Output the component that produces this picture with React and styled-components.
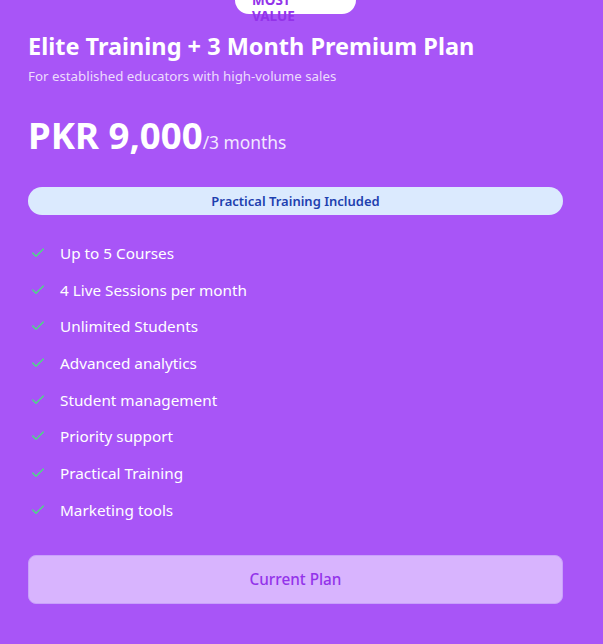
import styled, { createGlobalStyle } from 'styled-components'
import { Check } from 'lucide-react'

const GlobalStyle = createGlobalStyle`
  html, body {
    margin: 0;
    padding: 0;
    background: #a855f7;
  }
  body {
    font-family: "Noto Sans", "Open Sans", sans-serif;
  }
`

const features = [
  'Up to 5 Courses',
  '4 Live Sessions per month',
  'Unlimited Students',
  'Advanced analytics',
  'Student management',
  'Priority support',
  'Practical Training',
  'Marketing tools',
]

const Card = styled.div`
  position: relative;
  background: #a855f7;
  min-height: 644px;
  box-sizing: border-box;
  padding: 30px 40px 0 28px;
  color: #fff;
`

const Badge = styled.div`
  position: absolute;
  top: -14px;
  left: 235px;
  width: 121px;
  height: 28px;
  box-sizing: border-box;
  padding: 6px 40px 0 17px;
  background: #fff;
  border-radius: 14px;
  color: #9333ea;
  font-size: 13.5px;
  font-weight: 700;
  line-height: 16px;
  text-transform: uppercase;
`

const Title = styled.h2`
  margin: 0;
  font-size: 23.5px;
  font-weight: 700;
  line-height: 32px;
`

const Subtitle = styled.p`
  margin: 5px 0 0;
  font-size: 13.3px;
  line-height: 18px;
  color: #eddcfd;
`

const PriceRow = styled.div`
  display: flex;
  align-items: baseline;
  margin-top: 25px;
`

const Amount = styled.span`
  font-size: 36.6px;
  font-weight: 700;
  line-height: 50px;
`

const Period = styled.span`
  font-size: 17.4px;
  color: #f3e8ff;
`

const IncludedPill = styled.div`
  margin-top: 27px;
  height: 28px;
  display: flex;
  align-items: center;
  justify-content: center;
  background: #dbeafe;
  border-radius: 14px;
  color: #1e40af;
  font-size: 13px;
  font-weight: 600;
`

const FeatureList = styled.ul`
  list-style: none;
  margin: 27px 0 0;
  padding: 0;
  display: flex;
  flex-direction: column;
  gap: 14.7px;
`

const Feature = styled.li`
  display: flex;
  align-items: center;
  gap: 14px;
  font-size: 15.3px;
  line-height: 22px;
  color: #fff;
`

const CheckIcon = styled(Check)`
  flex-shrink: 0;
  margin-left: 2px;
  color: #4ade80;
`

const PlanButton = styled.button`
  display: block;
  width: 100%;
  height: 49px;
  margin-top: 34px;
  border: 1px solid #c9a0fb;
  border-radius: 8px;
  background: #d8b4fe;
  color: #9333ea;
  font-family: inherit;
  font-size: 15.3px;
  font-weight: 500;
`

export default function App() {
  return (
    <>
      <GlobalStyle />
      <Card>
        <Badge>Most Value</Badge>
        <Title>Elite Training + 3 Month Premium Plan</Title>
        <Subtitle>For established educators with high-volume sales</Subtitle>
        <PriceRow>
          <Amount>PKR 9,000</Amount>
          <Period>/3 months</Period>
        </PriceRow>
        <IncludedPill>Practical Training Included</IncludedPill>
        <FeatureList>
          {features.map((f) => (
            <Feature key={f}>
              <CheckIcon size={16} strokeWidth={2} />
              {f}
            </Feature>
          ))}
        </FeatureList>
        <PlanButton>Current Plan</PlanButton>
      </Card>
    </>
  )
}
